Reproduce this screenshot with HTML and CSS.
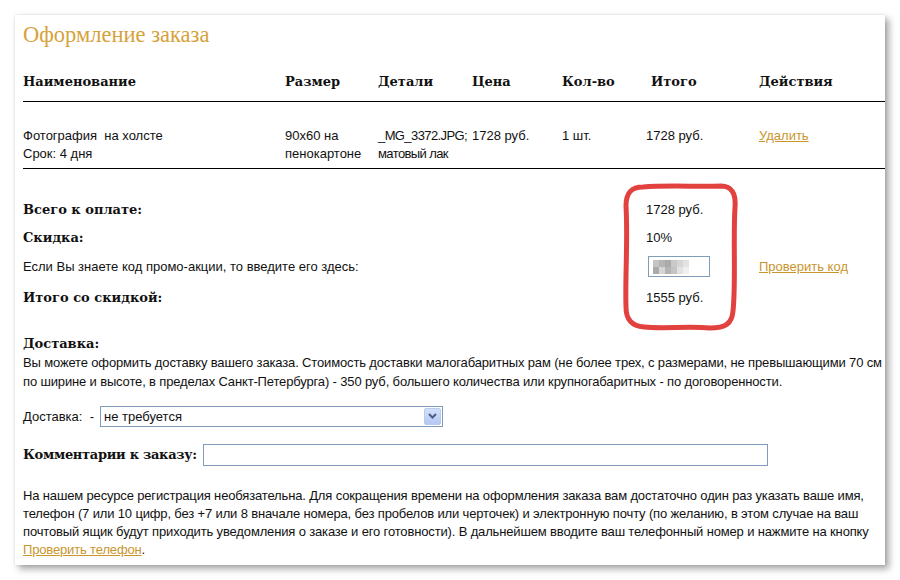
FILE: index.html
```html
<!DOCTYPE html>
<html lang="ru">
<head>
  <meta charset="UTF-8">
  <title>Оформление заказа</title>
  <link rel="stylesheet" href="styles.css">
</head>
<body>
  <div class="sheet">
    <h1 class="title">Оформление заказа</h1>

    <table class="cart">
      <colgroup>
        <col class="c-name">
        <col class="c-size">
        <col class="c-details">
        <col class="c-price">
        <col class="c-qty">
        <col class="c-total">
        <col class="c-actions">
      </colgroup>
      <thead>
        <tr>
          <th>Наименование</th>
          <th>Размер</th>
          <th>Детали</th>
          <th>Цена</th>
          <th>Кол-во</th>
          <th class="th-total">Итого</th>
          <th>Действия</th>
        </tr>
      </thead>
      <tbody>
        <tr>
          <td>Фотография&nbsp; на холсте<br>Срок: 4 дня</td>
          <td>90x60 на<br>пенокартоне</td>
          <td class="tight">_MG_3372.JPG;<br>матовый лак</td>
          <td>1728 руб.</td>
          <td>1 шт.</td>
          <td>1728 руб.</td>
          <td><a href="#" class="link">Удалить</a></td>
        </tr>
      </tbody>
    </table>

    <div class="summary">
      <div class="sum-row">
        <span class="label">Всего к оплате:</span>
        <span class="value">1728 руб.</span>
        <span></span>
      </div>
      <div class="sum-row">
        <span class="label">Скидка:</span>
        <span class="value">10%</span>
        <span></span>
      </div>
      <div class="sum-row promo">
        <span class="note">Если Вы знаете код промо-акции, то введите его здесь:</span>
        <span class="value">
          <span class="promo-input">
            <span class="mosaic">
              <i class="m1"></i><i class="m2"></i><i class="m3"></i><i class="m4"></i><i class="m5"></i><i class="m6"></i>
              <i class="m3"></i><i class="m5"></i><i class="m2"></i><i class="m1"></i><i class="m6"></i><i class="m0"></i>
            </span>
          </span>
        </span>
        <a href="#" class="link">Проверить код</a>
      </div>
      <div class="sum-row">
        <span class="label">Итого со скидкой:</span>
        <span class="value">1555 руб.</span>
        <span></span>
      </div>

      <svg class="marker" width="116" height="149" viewBox="0 0 116 149">
        <path d="M21 4 C45 2 78 4 99 3 C110 3 114 11 113 24 C111 58 114 100 111 128 C110 141 103 145 88 145 C66 143 41 146 22 144 C10 143 4 137 4 124 C3 94 6 56 4 23 C4 10 9 4 21 4 Z"
              fill="none" stroke="#e2423f" stroke-width="5" stroke-linejoin="round"/>
      </svg>
    </div>

    <h2 class="heading">Доставка:</h2>
    <p class="text">Вы можете оформить доставку вашего заказа. Стоимость доставки малогабаритных рам (не более трех, с размерами, не превышающими 70 см<br>по ширине и высоте, в пределах Санкт-Петербурга) - 350 руб, большего количества или крупногабаритных - по договоренности.</p>

    <div class="delivery">
      <span>Доставка: &nbsp;-</span>
      <div class="select">
        <span>не требуется</span>
        <span class="select-btn">
          <svg width="9" height="6" viewBox="0 0 9 6"><path d="M1 1 L4.5 4.5 L8 1" fill="none" stroke="#4a5f86" stroke-width="2"/></svg>
        </span>
      </div>
    </div>

    <div class="comment">
      <label class="comment-label">Комментарии к заказу:</label>
      <span class="comment-input"></span>
    </div>

    <p class="text footnote">На нашем ресурсе регистрация необязательна. Для сокращения времени на оформления заказа вам достаточно один раз указать ваше имя,<br>телефон (7 или 10 цифр, без +7 или 8 вначале номера, без пробелов или черточек) и электронную почту (по желанию, в этом случае на ваш<br>почтовый ящик будут приходить уведомления о заказе и его готовности). В дальнейшем вводите ваш телефонный номер и нажмите на кнопку<br><a href="#" class="link">Проверить телефон</a>.</p>
  </div>
</body>
</html>
```

FILE: styles.css
```css
:root {
  --gold: #d6a23b;
  --link: #c9952c;
  --field: #7f9db9;
  --text: #111;
}

* {
  margin: 0;
  padding: 0;
  box-sizing: border-box;
}

body {
  background: #fff;
  color: var(--text);
  font-family: 'Liberation Sans', Arial, sans-serif;
  font-size: 13px;
}

.sheet {
  margin: 15px;
  width: 870px;
  height: 550px;
  padding: 9px 0 0 8px;
  background: #fff;
  box-shadow: 4px 4px 7px rgba(0, 0, 0, 0.35), 0 0 3px rgba(0, 0, 0, 0.12);
}

.title {
  font-family: 'Liberation Serif', 'Times New Roman', serif;
  font-weight: normal;
  font-size: 22.5px;
  line-height: 22px;
  color: var(--gold);
  margin-bottom: 17px;
}

.cart {
  width: 862px;
  border-collapse: collapse;
  table-layout: fixed;
}

.c-name { width: 262px; }
.c-size { width: 93px; }
.c-details { width: 94px; }
.c-price { width: 90px; }
.c-qty { width: 84px; }
.c-total { width: 113px; }

.cart th {
  height: 38px;
  text-align: left;
  vertical-align: middle;
  font-family: 'DejaVu Serif', Georgia, serif;
  font-size: 13px;
  font-weight: bold;
  border-bottom: 1px solid #000;
}

.cart .th-total {
  padding-left: 5px;
}

.cart td {
  height: 67px;
  vertical-align: top;
  padding-top: 25px;
  line-height: 18px;
  border-bottom: 1px solid #000;
  white-space: nowrap;
}

.cart .tight {
  letter-spacing: -0.6px;
}

.link {
  color: var(--link);
  text-decoration: underline;
}

.summary {
  position: relative;
  margin-top: 27px;
}

.sum-row {
  display: grid;
  grid-template-columns: 623px 113px auto;
  align-items: center;
  height: 28px;
}

.sum-row.promo {
  height: 30px;
}

.sum-row:last-of-type {
  height: 31px;
}

.label {
  font-family: 'DejaVu Serif', Georgia, serif;
  font-weight: bold;
  font-size: 13px;
}

.promo-input {
  display: flex;
  align-items: center;
  margin-left: 2px;
  width: 62px;
  height: 21px;
  border: 1px solid var(--field);
  padding-left: 4px;
}

.mosaic {
  display: grid;
  grid-template-columns: repeat(6, 6px);
  grid-auto-rows: 7px;
}

.mosaic .m0 { background: #f0f0f0; }
.mosaic .m1 { background: #c4c4c4; }
.mosaic .m2 { background: #b4b4b4; }
.mosaic .m3 { background: #aaaaaa; }
.mosaic .m4 { background: #c9c9c9; }
.mosaic .m5 { background: #d6d6d6; }
.mosaic .m6 { background: #e2e2e2; }

.marker {
  position: absolute;
  left: 599px;
  top: -13px;
}

.heading {
  margin-top: 22px;
  font-family: 'DejaVu Serif', Georgia, serif;
  font-size: 13px;
  font-weight: bold;
  line-height: 18px;
}

.text {
  line-height: 19px;
  white-space: nowrap;
  letter-spacing: -0.15px;
}

.delivery {
  display: flex;
  align-items: center;
  gap: 6px;
  margin-top: 15px;
}

.select {
  width: 343px;
  height: 21px;
  border: 1px solid var(--field);
  display: flex;
  align-items: center;
  justify-content: space-between;
  padding: 0 1px 0 3px;
}

.select-btn {
  width: 17px;
  height: 17px;
  border-radius: 2px;
  background: linear-gradient(#d4e0fa, #b4c8f4);
  border: 1px solid #b9cbef;
  display: flex;
  align-items: center;
  justify-content: center;
}

.comment {
  display: flex;
  align-items: center;
  gap: 6px;
  margin-top: 17px;
}

.comment-label {
  font-family: 'DejaVu Serif', Georgia, serif;
  font-size: 13px;
  font-weight: bold;
  letter-spacing: -0.3px;
}

.comment-input {
  width: 565px;
  height: 22px;
  border: 1px solid var(--field);
}

.footnote {
  margin-top: 21px;
  line-height: 18px;
}
```
